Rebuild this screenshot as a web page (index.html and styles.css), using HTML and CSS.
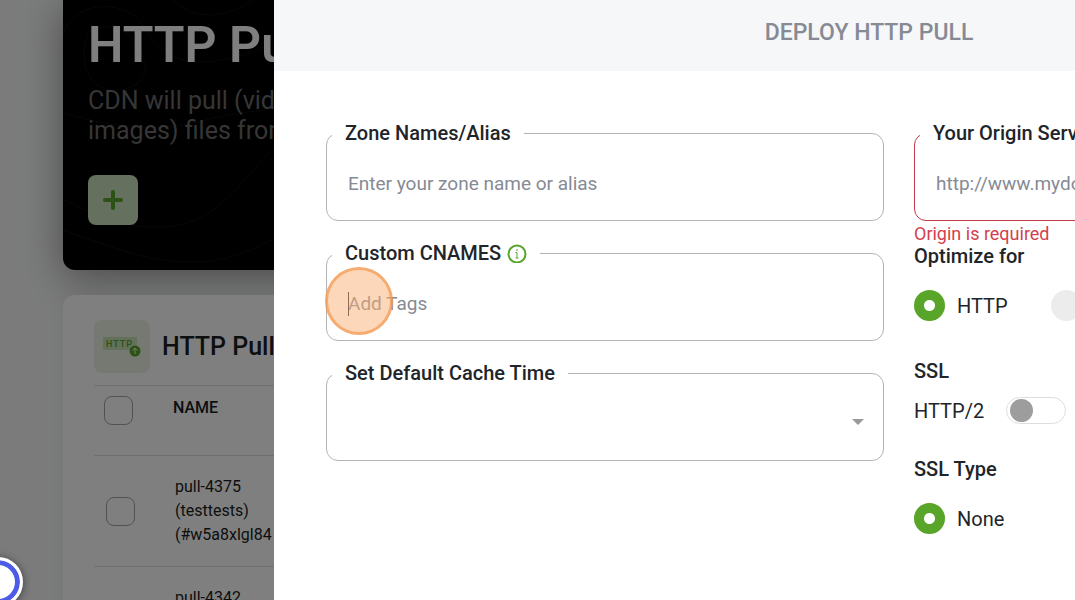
FILE: index.html
```html
<!DOCTYPE html>
<html lang="en">
<head>
<meta charset="utf-8">
<title>HTTP Pull</title>
<link rel="stylesheet" href="styles.css">
</head>
<body>
<main class="page">
  <section class="hero">
    <svg class="hero-lines" viewBox="0 0 211 270" preserveAspectRatio="none" aria-hidden="true">
      <path d="M0 33C10 8 40 0 65 12C85 22 80 40 112 57C135 67 170 62 211 42M110 0C130 20 160 20 190 0M24 35C36 22 60 24 72 42C90 65 85 90 50 90C25 90 16 62 24 35M0 113C60 130 100 132 150 118C175 112 195 112 211 108M0 199C60 230 110 238 150 210C175 192 190 168 211 148M0 230C70 255 90 262 130 262C165 262 190 250 211 238"/>
    </svg>
    <h1 class="hero-title">HTTP Pull</h1>
    <p class="hero-text">CDN will pull (videos,<br>images) files from</p>
    <button class="add-button" type="button" aria-label="Add">
      <svg width="20" height="20" viewBox="0 0 20 20"><path d="M10 2V18M2 10H18"/></svg>
    </button>
  </section>
  <section class="list-card">
    <header class="list-header">
      <span class="list-icon">
        <svg width="56" height="53" viewBox="0 0 56 53" aria-hidden="true">
          <rect class="icon-plate" x="9" y="17" width="34" height="13"/>
          <text class="icon-text" x="12" y="27">HTTP</text>
          <circle class="icon-dot" cx="41" cy="31" r="5.5"/>
          <path class="icon-arrow" d="M41 34V28M38.5 30.5L41 28L43.500 30.5"/>
        </svg>
      </span>
      <h2 class="list-title">HTTP Pull</h2>
    </header>
    <table class="zones">
      <thead>
        <tr><th class="check-cell"><input class="check" type="checkbox" aria-label="Select all"></th><th class="name-head">NAME</th></tr>
      </thead>
      <tbody>
        <tr><td class="check-cell"><input class="check" type="checkbox" aria-label="Select pull-4375"></td><td>pull-4375<br>(testtests)<br>(#w5a8xlgl84</td></tr>
        <tr><td class="check-cell"><input class="check" type="checkbox" aria-label="Select pull-4342"></td><td>pull-4342<br>(testtests)<br>(#w5a8xlgl42</td></tr>
      </tbody>
    </table>
  </section>
</main>
<div class="backdrop"></div>
<button class="launcher" type="button" aria-label="Help"></button>
<aside class="drawer">
  <header class="drawer-header"><h2 class="drawer-title">DEPLOY HTTP PULL</h2></header>
  <form class="form">
    <div class="column">
      <fieldset class="field">
        <legend><label for="zone">Zone Names/Alias</label></legend>
        <input class="control" id="zone" type="text" placeholder="Enter your zone name or alias">
      </fieldset>
      <fieldset class="field tags-field">
        <legend><label for="tags">Custom CNAMES</label>
          <svg class="info" width="20" height="20" viewBox="0 0 20 20" aria-hidden="true"><circle cx="10" cy="11" r="8.500"/><path d="M10 9.500V15M8.500 9.500H10M8.500 15H11.500M10 6V8"/></svg>
        </legend>
        <input class="control" id="tags" type="text" placeholder="Add Tags">
        <span class="caret"></span>
        <span class="pointer"></span>
      </fieldset>
      <fieldset class="field select-field">
        <legend><label for="cache">Set Default Cache Time</label></legend>
        <select class="control" id="cache"><option></option></select>
      </fieldset>
    </div>
    <div class="column-right">
      <fieldset class="field invalid">
        <legend><label for="origin">Your Origin Server</label></legend>
        <input class="control" id="origin" type="text" placeholder="http://www.mydomain.com">
      </fieldset>
      <p class="error">Origin is required</p>
      <h3 class="group-title">Optimize for</h3>
      <div class="options">
        <label class="option"><input class="radio" type="radio" name="optimize" checked>HTTP</label>
        <label class="option"><input class="radio" type="radio" name="optimize">Video</label>
      </div>
      <h3 class="group-title">SSL</h3>
      <label class="switch-row">HTTP/2<input class="switch" type="checkbox"></label>
      <h3 class="group-title">SSL Type</h3>
      <div class="options">
        <label class="option"><input class="radio" type="radio" name="ssl" checked>None</label>
      </div>
    </div>
  </form>
</aside>
</body>
</html>
```

FILE: styles.css
```css
* { box-sizing: border-box; }
html, body { height: 100%; }
body {
  margin: 0;
  overflow: hidden;
  background: #f6f7f8;
  color: #212529;
  font-family: Roboto, "Liberation Sans", sans-serif;
}
h1, h2, h3, p { margin: 0; }
button, input, select { font: inherit; }
.page { height: 100%; padding-left: 63px; overflow: hidden; }

.hero {
  position: relative;
  padding: 15px 25px 45px;
  border-radius: 0 0 12px 12px;
  background: #000;
  box-shadow: 0 8px 40px rgba(0, 0, 0, .4);
}
.hero-lines {
  position: absolute;
  top: 0;
  left: 0;
  width: 211px;
  height: 100%;
  fill: none;
  stroke: #101010;
  stroke-width: 1;
}
.hero-title { position: relative; color: #fff; font-size: 50px; font-weight: 600; line-height: 60px; }
.hero-text { position: relative; margin-top: 11px; color: #6c6c6c; font-size: 25px; line-height: 30px; }
.add-button {
  position: relative;
  display: grid;
  place-items: center;
  width: 50px;
  height: 50px;
  margin-top: 29px;
  padding: 0;
  border: 0;
  border-radius: 8px;
  background: #cbe3bc;
}
.add-button path { fill: none; stroke: #58a52a; stroke-width: 4; stroke-linecap: round; }

.list-card {
  position: relative;
  margin-top: 25px;
  padding: 25px 31px;
  border-radius: 12px;
  background: #fff;
  box-shadow: 0 0 20px rgba(0, 0, 0, .05);
}
.list-header { display: flex; align-items: center; gap: 12px; padding-bottom: 12px; }
.list-icon { display: block; height: 53px; border-radius: 8px; background: #ebf2e4; }
.list-icon svg { display: block; }
.icon-plate { fill: #c6e0b4; }
.icon-text { fill: #58a52a; font-size: 9px; font-weight: 500; letter-spacing: 1px; }
.icon-dot { fill: #58a52a; }
.icon-arrow { fill: none; stroke: #e8f3e1; stroke-width: 1; }
.list-title { color: #181c20; font-size: 25px; font-weight: 500; line-height: 30px; }

.zones { width: 100%; border-collapse: collapse; font-size: 16px; line-height: 24px; color: #181c20; }
.zones tr { border-top: 1px solid #dcdee2; }
.zones th { height: 70px; padding: 10px 0; font-weight: 500; text-align: left; vertical-align: top; }
.zones td { padding: 19px 2px; vertical-align: middle; }
.zones .check-cell { width: 79px; padding-left: 10px; }
.zones td.check-cell { padding-left: 12px; }
.check {
  appearance: none;
  display: block;
  width: 29px;
  height: 29px;
  margin: 0;
  border: 1px solid #a2a4ac;
  border-radius: 8px;
}

.backdrop { position: fixed; inset: 0; background: rgba(0, 0, 0, .5); }
.launcher {
  position: fixed;
  left: -27px;
  bottom: -7px;
  width: 50px;
  height: 50px;
  border: 3px solid #fff;
  border-radius: 50%;
  background: #fff;
  box-shadow: inset 0 0 0 5px #4d5be6, 0 1px 8px rgba(0, 0, 0, .5);
}

.drawer { position: fixed; top: 0; bottom: 0; left: 274px; right: -389px; background: #fff; }
.drawer-header { padding: 17px 0 23px; background: #f6f7f9; text-align: center; }
.drawer-title { color: #868a94; font-size: 23px; font-weight: 500; line-height: 31px; }
.form {
  display: grid;
  grid-template-columns: 1fr 1fr;
  gap: 30px;
  margin-right: -8px;
  padding: 50px 0 0 52px;
}
.column { display: flex; flex-direction: column; gap: 20px; }
.field {
  position: relative;
  min-width: 0;
  height: 100px;
  margin: 0;
  padding: 0 21px;
  border: 1px solid #b2b3b8;
  border-radius: 12px;
}
.field legend {
  display: flex;
  align-items: center;
  gap: 6px;
  margin-left: -16px;
  padding: 0 13px;
  font-size: 20px;
  font-weight: 500;
  line-height: 24px;
}
.control {
  display: block;
  width: 100%;
  height: 50px;
  margin-top: 13px;
  padding: 0;
  border: 0;
  outline: 0;
  background: transparent;
  color: #212529;
  font-size: 19px;
}
.control::placeholder { color: #868a94; opacity: 1; }
.select-field::after {
  content: "";
  position: absolute;
  top: 34px;
  right: 19px;
  border: 6px solid transparent;
  border-top-color: #999;
  border-bottom: 0;
}
select.control { appearance: none; }
.info { fill: none; stroke: #58a52a; stroke-width: 2; }
.info path { stroke-width: 1; }
.caret { position: absolute; top: 27px; left: 21px; width: 1px; height: 24px; background: #212529; }
.pointer {
  position: absolute;
  top: 2px;
  left: -2px;
  width: 68px;
  height: 68px;
  border: 3px solid rgba(244, 150, 75, .65);
  border-radius: 50%;
  background: rgba(250, 176, 116, .5);
}
.invalid { border-color: #c43b4a; }
.error { padding-top: 2px; color: #d33f4e; font-size: 18px; line-height: 21px; }
.group-title { font-size: 20px; font-weight: 500; line-height: 24px; }
.options { display: flex; gap: 43px; padding: 22px 0 38px; }
.option { display: flex; align-items: center; gap: 12px; font-size: 20px; line-height: 24px; }
.radio {
  appearance: none;
  width: 31px;
  height: 31px;
  margin: 0;
  border-radius: 50%;
  background: #ececec;
}
.radio:checked { background: radial-gradient(circle, #fff 5px, #58a52a 6px); }
.switch-row { display: flex; align-items: center; gap: 22px; padding: 14px 0 33px; font-size: 20px; line-height: 24px; }
.switch {
  appearance: none;
  width: 60px;
  height: 27px;
  margin: 0;
  padding: 1px 3px;
  border: 1px solid #dedede;
  border-radius: 14px;
}
.switch::before { content: ""; display: block; width: 23px; height: 23px; border-radius: 50%; background: #9d9d9d; }
```
